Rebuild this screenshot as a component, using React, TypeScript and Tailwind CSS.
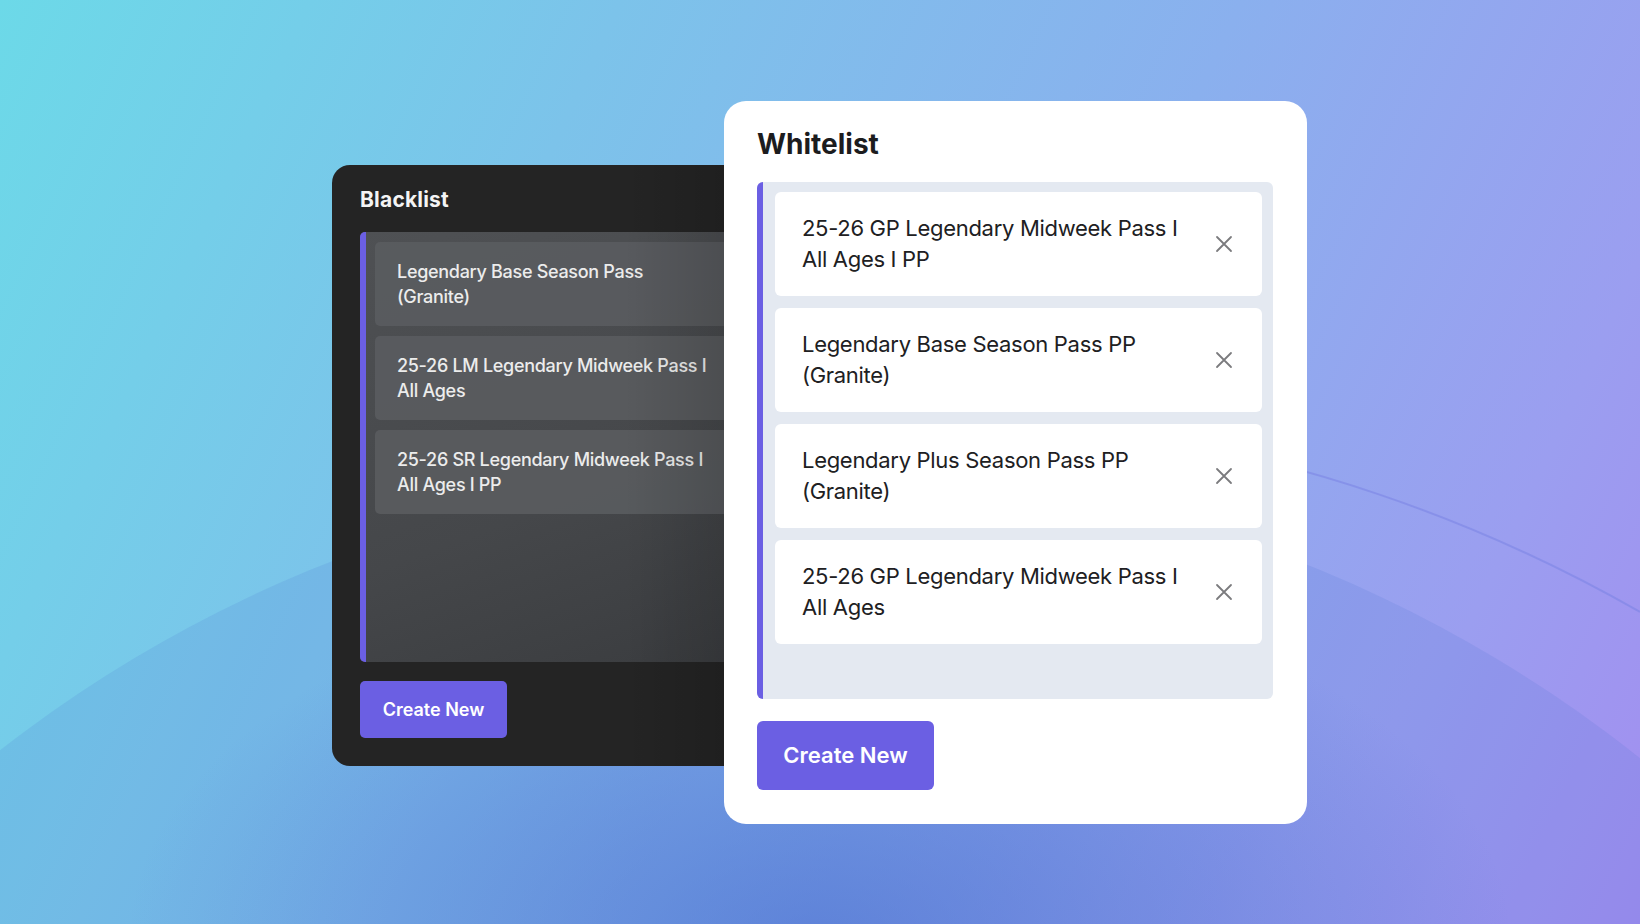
const blacklist = [
  'Legendary Base Season Pass (Granite)',
  '25-26 LM Legendary Midweek Pass I All Ages',
  '25-26 SR Legendary Midweek Pass I All Ages I PP',
]

const whitelist = [
  '25-26 GP Legendary Midweek Pass I All Ages I PP',
  'Legendary Base Season Pass PP (Granite)',
  'Legendary Plus Season Pass PP (Granite)',
  '25-26 GP Legendary Midweek Pass I All Ages',
]

function CloseIcon() {
  return (
    <svg width="18" height="18" viewBox="0 0 18 18" fill="none" className="shrink-0">
      <path d="M2 2L16 16M16 2L2 16" stroke="#7b7b7e" strokeWidth="1.8" strokeLinecap="round" />
    </svg>
  )
}

function BlacklistPanel() {
  return (
    <div className="relative mt-[64px] w-[452px] shrink-0 overflow-hidden rounded-[18px] bg-[#242424] pt-[21px] pb-[28px] pl-[28px] pr-[28px]">
      <h2 className="text-[21px] leading-[28px] font-bold text-[#f4f4f4] tracking-[0.2px]">Blacklist</h2>

      <div className="mt-[18px] flex h-[430px] rounded-l-[5px] bg-[linear-gradient(160deg,#4f5154_0%,#45474a_60%,#3a3c3f_100%)]">
        <div className="w-[6px] shrink-0 rounded-l-[5px] bg-[#6b5fe3]" />
        <div className="flex flex-1 flex-col gap-[10px] pt-[10px] pl-[9px]">
          {blacklist.map((item) => (
            <div key={item} className="flex h-[84px] items-center rounded-l-[5px] bg-[#5a5c5f]/90 pl-[22px]">
              <p className="w-[320px] text-[18px] leading-[25px] font-medium tracking-[-0.3px] text-[#ececec]">{item}</p>
            </div>
          ))}
        </div>
      </div>

      <button className="mt-[19px] flex h-[57px] w-[147px] items-center justify-center rounded-[5px] bg-[#6b5fe3] text-[18px] font-semibold text-white">
        Create New
      </button>

      {/* shade cast by the whitelist card */}
      <div className="pointer-events-none absolute inset-y-0 right-0 w-[160px] bg-[linear-gradient(90deg,rgba(0,0,0,0)_0%,rgba(0,0,0,0.22)_100%)]" />
    </div>
  )
}

function WhitelistPanel() {
  return (
    <div className="relative z-10 -ml-[60px] w-[583px] shrink-0 rounded-[22px] bg-white px-[33px] pt-[26px] pb-[34px]">
      <h2 className="text-[28px] leading-[34px] font-bold text-[#1c1c1e]">Whitelist</h2>

      <div className="mt-[21px] flex h-[517px] w-[516px] rounded-[6px] bg-[#e4e9f1]">
        <div className="w-[6px] shrink-0 rounded-l-[6px] bg-[#6b5fe3]" />
        <div className="flex flex-1 flex-col gap-[12px] pt-[10px] pl-[12px] pr-[11px]">
          {whitelist.map((item) => (
            <div key={item} className="flex h-[104px] items-center justify-between rounded-[6px] bg-white pl-[27px] pr-[29px]">
              <p className="w-[385px] text-[22px] leading-[31px] font-normal tracking-[-0.3px] text-[#202022]">{item}</p>
              <CloseIcon />
            </div>
          ))}
        </div>
      </div>

      <button className="mt-[22px] flex h-[69px] w-[177px] items-center justify-center rounded-[6px] bg-[#6b5fe3] text-[22px] font-semibold text-white">
        Create New
      </button>
    </div>
  )
}

export default function App() {
  return (
    <div
      className="relative h-[924px] w-full overflow-hidden bg-[linear-gradient(115deg,#6cd9e8_0%,#7cc3ea_30%,#8ab0ee_60%,#9b9ef0_85%,#a28ef0_100%)]"
      style={{ fontFamily: 'Inter, "Noto Sans", sans-serif' }}
    >
      {/* big background arc */}
      <div className="absolute left-[-510px] top-[470px] h-[2650px] w-[2650px] rounded-full bg-[#4a6fd0]/15" />
      <div className="absolute left-[120px] top-[560px] h-[760px] w-[1400px] rounded-full bg-[radial-gradient(ellipse_at_center,rgba(60,95,200,0.5)_0%,rgba(70,100,205,0.25)_40%,rgba(80,110,210,0)_70%)]" />
      <svg className="absolute inset-0" width="1640" height="924" viewBox="0 0 1640 924" fill="none">
        <path d="M1100 429 A1485 1485 0 0 1 1640 612" stroke="#7a84e4" strokeOpacity="0.55" strokeWidth="2" />
      </svg>

      <div className="relative flex items-start pl-[332px] pt-[101px]">
        <BlacklistPanel />
        <WhitelistPanel />
      </div>
    </div>
  )
}
